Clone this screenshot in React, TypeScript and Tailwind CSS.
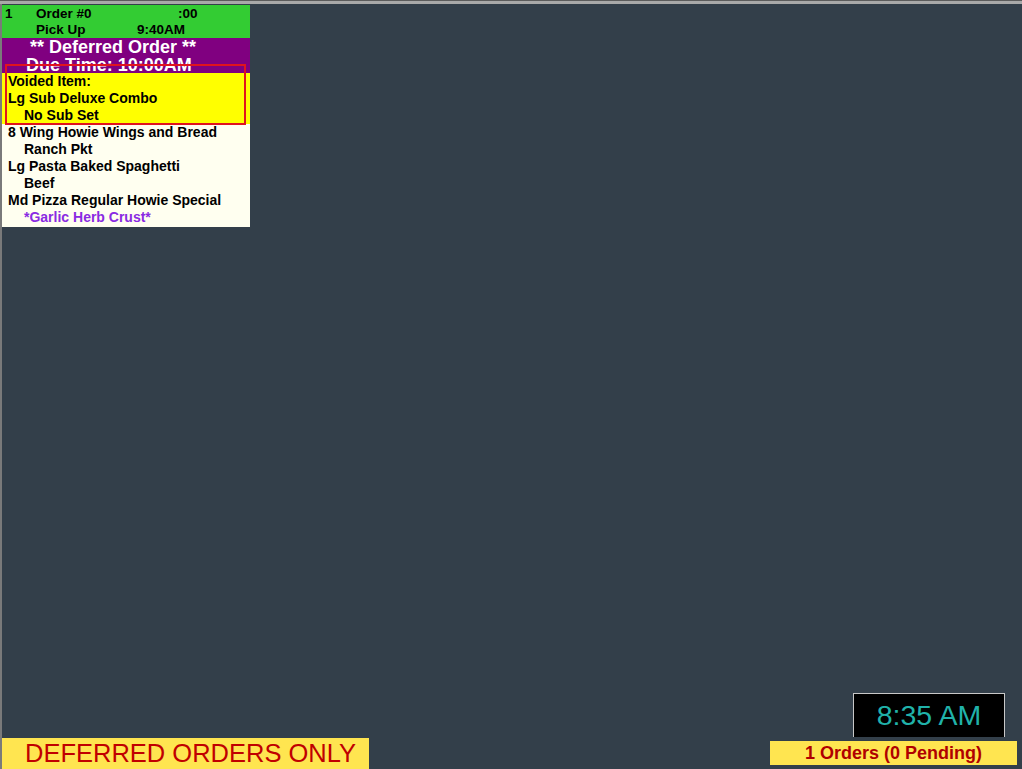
const items: { text: string; indent?: boolean; color?: string }[] = [
  { text: "8 Wing Howie Wings and Bread" },
  { text: "Ranch Pkt", indent: true },
  { text: "Lg Pasta Baked Spaghetti" },
  { text: "Beef", indent: true },
  { text: "Md Pizza Regular Howie Special" },
  { text: "*Garlic Herb Crust*", indent: true, color: "text-[#8a2be2]" },
];

const OrderCard = () => {
  return (
    <div className="relative w-[248px] font-bold text-[14px] text-black">
      {/* Header */}
      <div className="bg-[#33cc33] h-[33px] pt-[1px] leading-[16px] text-[13.5px]">
        <div className="flex">
          <span className="w-[34px] pl-[3px]">1</span>
          <span className="w-[142px]">Order #0</span>
          <span>:00</span>
        </div>
        <div className="flex">
          <span className="w-[34px]" />
          <span className="w-[101px]">Pick Up</span>
          <span>9:40AM</span>
        </div>
      </div>

      {/* Deferred banner */}
      <div className="bg-[#800080] h-[35px] overflow-hidden text-white text-[18px] leading-[18px]">
        <div className="pl-[28px]">** Deferred Order **</div>
        <div className="pl-[24px]">Due Time: 10:00AM</div>
      </div>

      {/* Voided */}
      <div className="bg-[#ffff00] h-[51px] pl-[6px] leading-[17px]">
        <div>Voided Item:</div>
        <div>Lg Sub Deluxe Combo</div>
        <div className="pl-[16px]">No Sub Set</div>
      </div>

      {/* Items */}
      <div className="bg-[#fffff0] pl-[6px] pb-[1px] leading-[17px]">
        {items.map((it, i) => (
          <div key={i} className={`${it.indent ? "pl-[16px]" : ""} ${it.color ?? ""}`}>
            {it.text}
          </div>
        ))}
      </div>

      {/* Voided highlight */}
      <div className="absolute left-[3px] top-[59px] w-[241px] h-[61px] border-2 border-[#e0141e]" />
    </div>
  );
};

export default function App() {
  return (
    <div
      className="w-[1022px] h-[769px] flex flex-col bg-[#333f4a] overflow-hidden"
      style={{ fontFamily: '"Liberation Sans", Arial, sans-serif' }}
    >
      <div className="h-[1px] bg-[#5c5c5c]" />
      <div className="h-[3px] bg-[#a9a9a9]" />
      <div className="flex-1 flex flex-col border-l-2 border-[#7a7a7a] pt-[1px]">
        <OrderCard />
        <div className="flex-1" />
        <div className="flex items-end justify-between">
          <div className="w-[367px] h-[31px] bg-[#ffe550] text-[#c00000] text-[25.5px] leading-[31px] pl-[23px]">
            DEFERRED ORDERS ONLY
          </div>
          <div className="flex flex-col items-end mr-[5px] mb-[4px]">
            <div className="w-[152px] h-[44px] mr-[12px] bg-black border border-b-0 border-[#c8c8c8] text-[#20b2aa] text-[28.5px] leading-[42px] text-center">
              8:35 AM
            </div>
            <div className="mt-[4px] w-[247px] h-[24px] bg-[#ffe550] text-[#b00000] font-bold text-[18px] leading-[24px] text-center">
              1 Orders (0 Pending)
            </div>
          </div>
        </div>
      </div>
    </div>
  );
}
